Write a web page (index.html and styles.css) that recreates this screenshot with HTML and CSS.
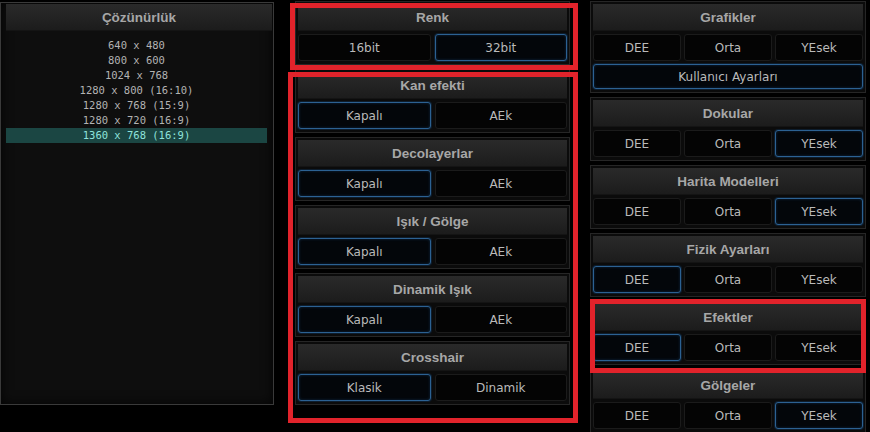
FILE: index.html
```html
<!DOCTYPE html>
<html lang="tr">
<head>
    <meta charset="UTF-8">
    <meta name="viewport" content="width=device-width, initial-scale=1.0">
    <title>Grafik Ayarları</title>

    <link rel="stylesheet" href="styles.css">
</head>

<body>

    <div class="screen">

        <!-- Resolution list -->
        <section class="res-panel">
            <h2 class="panel-title">Çözünürlük</h2>
            <ul class="res-list">
                <li>640 x 480</li>
                <li>800 x 600</li>
                <li>1024 x 768</li>
                <li>1280 x 800 (16:10)</li>
                <li>1280 x 768 (15:9)</li>
                <li>1280 x 720 (16:9)</li>
                <li class="active">1360 x 768 (16:9)</li>
            </ul>
        </section>

        <!-- Middle column -->
        <div class="column mid">
            <div class="panel">
                <h2 class="panel-title">Renk</h2>
                <div class="opts">
                    <button class="opt">16bit</button>
                    <button class="opt on">32bit</button>
                </div>
            </div>
            <div class="panel">
                <h2 class="panel-title">Kan efekti</h2>
                <div class="opts">
                    <button class="opt on">Kapalı</button>
                    <button class="opt">AEk</button>
                </div>
            </div>
            <div class="panel">
                <h2 class="panel-title">Decolayerlar</h2>
                <div class="opts">
                    <button class="opt on">Kapalı</button>
                    <button class="opt">AEk</button>
                </div>
            </div>
            <div class="panel">
                <h2 class="panel-title">Işık / Gölge</h2>
                <div class="opts">
                    <button class="opt on">Kapalı</button>
                    <button class="opt">AEk</button>
                </div>
            </div>
            <div class="panel">
                <h2 class="panel-title">Dinamik Işık</h2>
                <div class="opts">
                    <button class="opt on">Kapalı</button>
                    <button class="opt">AEk</button>
                </div>
            </div>
            <div class="panel">
                <h2 class="panel-title">Crosshair</h2>
                <div class="opts">
                    <button class="opt on">Klasik</button>
                    <button class="opt">Dinamik</button>
                </div>
            </div>
        </div>

        <!-- Right column -->
        <div class="column right">
            <div class="panel">
                <h2 class="panel-title">Grafikler</h2>
                <div class="opts">
                    <button class="opt">DEE</button>
                    <button class="opt">Orta</button>
                    <button class="opt">YEsek</button>
                </div>
                <div class="opts">
                    <button class="opt wide on">Kullanıcı Ayarları</button>
                </div>
            </div>
            <div class="panel">
                <h2 class="panel-title">Dokular</h2>
                <div class="opts">
                    <button class="opt">DEE</button>
                    <button class="opt">Orta</button>
                    <button class="opt on">YEsek</button>
                </div>
            </div>
            <div class="panel">
                <h2 class="panel-title">Harita Modelleri</h2>
                <div class="opts">
                    <button class="opt">DEE</button>
                    <button class="opt">Orta</button>
                    <button class="opt on">YEsek</button>
                </div>
            </div>
            <div class="panel">
                <h2 class="panel-title">Fizik Ayarları</h2>
                <div class="opts">
                    <button class="opt on">DEE</button>
                    <button class="opt">Orta</button>
                    <button class="opt">YEsek</button>
                </div>
            </div>
            <div class="panel">
                <h2 class="panel-title">Efektler</h2>
                <div class="opts">
                    <button class="opt on">DEE</button>
                    <button class="opt">Orta</button>
                    <button class="opt">YEsek</button>
                </div>
            </div>
            <div class="panel">
                <h2 class="panel-title">Gölgeler</h2>
                <div class="opts">
                    <button class="opt">DEE</button>
                    <button class="opt">Orta</button>
                    <button class="opt on">YEsek</button>
                </div>
            </div>
        </div>

        <!-- Red highlight frames drawn over the screenshot -->
        <div class="mark mark-renk"></div>
        <div class="mark mark-toggles"></div>
        <div class="mark mark-efekt"></div>
    </div>

</body>
</html>
```

FILE: styles.css
```css
body {
    margin: 0;
    background-color: #000;
    font-family: 'Liberation Sans', Arial, sans-serif;
    overflow: hidden;
}

.screen {
    position: relative;
    display: flex;
    align-items: flex-start;
    width: 870px;
    height: 432px;
}

/* Resolution list */
.res-panel {
    box-sizing: border-box;
    width: 274px;
    height: 403px;
    margin-top: 2px;
    padding: 1px 1px 0 5px;
    border: 1px solid #3a3a3a;
    background-color: #0e0e0e;
    box-shadow: inset 0 0 12px rgba(0, 0, 0, 0.8);
}

.res-list {
    list-style: none;
    margin: 0;
    padding: 7px 5px 0 0;
    font-family: 'DejaVu Sans Mono', monospace;
    font-size: 10.5px;
    color: #b3b3b3;
    text-align: center;
}

.res-list li {
    height: 15px;
    line-height: 15px;
}

.res-list li.active {
    background-color: #1b4643;
    color: #8fe3dc;
}

/* Columns */
.column {
    display: flex;
    flex-direction: column;
    gap: 4px;
    margin-top: 1px;
}

.mid {
    width: 275px;
    margin-left: 21px;
}

.right {
    width: 276px;
    margin-left: 20px;
}

.panel {
    display: flex;
    flex-direction: column;
    gap: 3px;
    padding: 2px 2px 3px;
    border: 1px solid #262626;
    background-color: #0b0b0b;
}

.panel-title {
    height: 27px;
    margin: 0;
    line-height: 27px;
    text-align: center;
    font-size: 13.5px;
    font-weight: bold;
    color: #a7a7a7;
    background: linear-gradient(#2a2a2a, #1c1c1c);
    border-bottom: 1px solid #141414;
    box-sizing: border-box;
}

.opts {
    display: flex;
    gap: 4px;
}

.right .opts {
    gap: 3px;
}

.opt {
    flex: 1;
    height: 27px;
    margin: 0;
    padding: 0;
    border: 1px solid #1b1b1b;
    border-radius: 3px;
    background-color: #040404;
    color: #bababa;
    font-family: 'DejaVu Sans', sans-serif;
    font-size: 12px;
    cursor: pointer;
}

.opt.wide {
    height: 25px;
}

.opt.on {
    border-color: #2c6192;
    background-color: #03060a;
    box-shadow: 0 0 0 1px #0d1d2d, inset 0 0 3px #102a44;
}

/* Red annotation frames */
.mark {
    position: absolute;
    box-sizing: border-box;
    border: 5px solid #e1232b;
}

.mark-renk {
    left: 290px;
    top: 3px;
    width: 288px;
    height: 67px;
}

.mark-toggles {
    left: 288px;
    top: 72px;
    width: 290px;
    height: 351px;
}

.mark-efekt {
    left: 590px;
    top: 299px;
    width: 276px;
    height: 74px;
}
```
